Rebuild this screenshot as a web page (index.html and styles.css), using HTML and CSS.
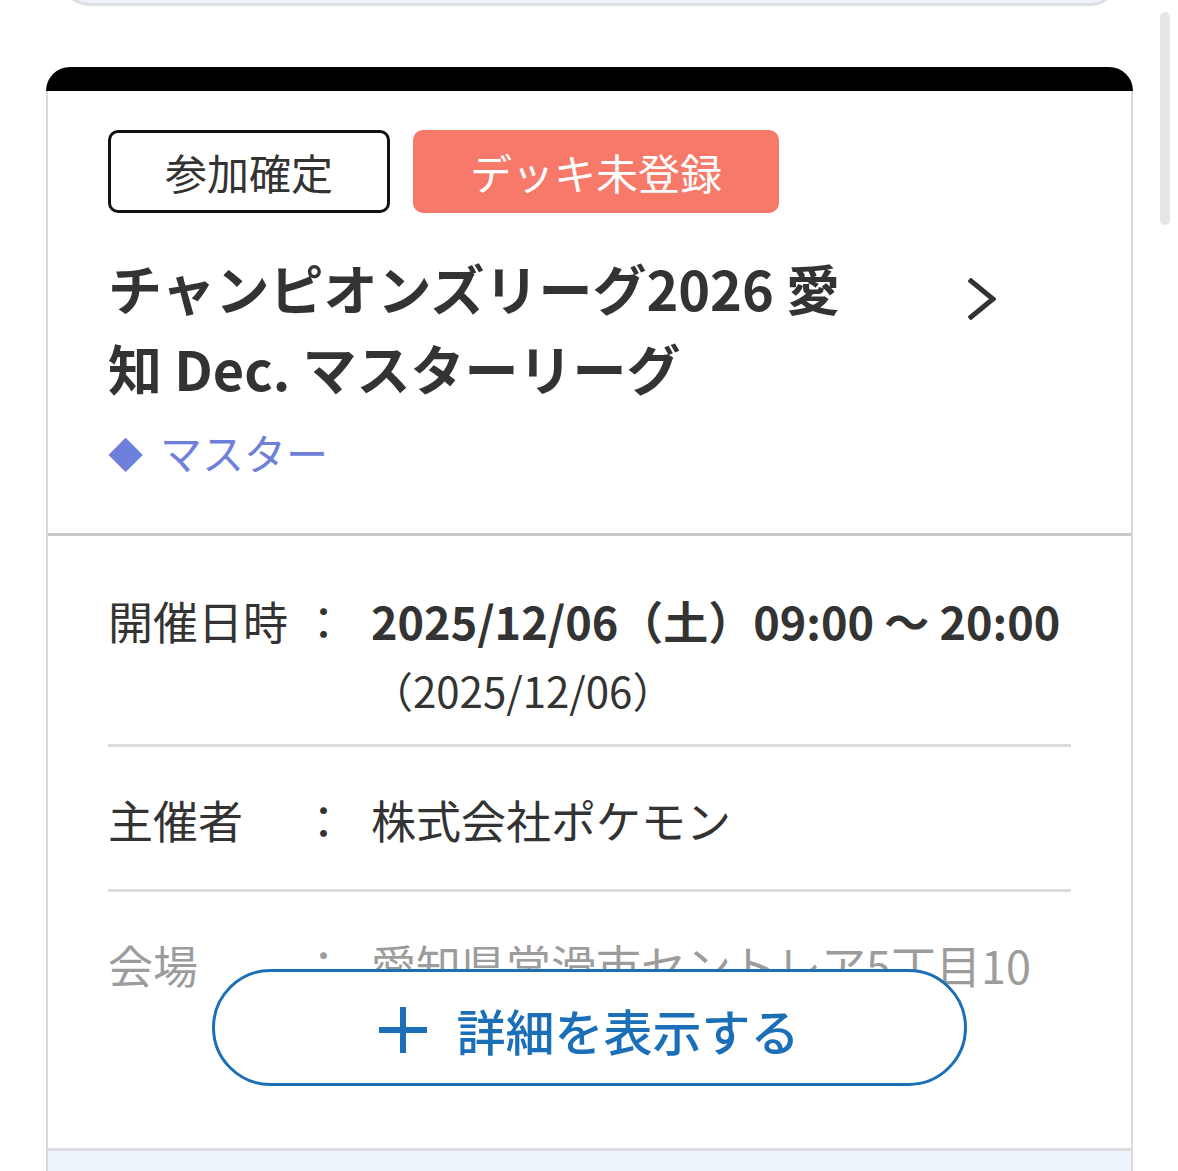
FILE: index.html
```html
<!DOCTYPE html>
<html lang="ja">
<head>
<meta charset="utf-8">
<title>大会カード</title>
<link rel="stylesheet" href="styles.css">
</head>
<body>
<div class="page">
  <div class="prev-card"></div>

  <div class="card">
    <div class="card-cap"></div>
    <div class="card-body">
      <section class="head">
        <div class="badges">
          <span class="badge badge-outline">参加確定</span>
          <span class="badge badge-alert">デッキ未登録</span>
        </div>
        <div class="title-row">
          <h2 class="title">チャンピオンズリーグ2026 愛知 Dec. マスターリーグ</h2>
          <svg class="chevron" viewBox="0 0 28 42" width="28" height="42" aria-hidden="true">
            <polyline points="3,3 25,21 3,39" fill="none" stroke="#333" stroke-width="5" stroke-linecap="square" stroke-linejoin="miter"/>
          </svg>
        </div>
        <div class="category"><span class="diamond">◆</span>マスター</div>
      </section>

      <section class="details">
        <div class="rows">
          <div class="row">
            <div class="label">開催日時</div>
            <div class="colon">：</div>
            <div class="value">
              <div class="value-main">2025/12/06（土）09:00 ～ 20:00</div>
              <div class="value-sub">（2025/12/06）</div>
            </div>
          </div>
          <div class="row">
            <div class="label">主催者</div>
            <div class="colon">：</div>
            <div class="value"><div class="value-plain">株式会社ポケモン</div></div>
          </div>
          <div class="row row-faded">
            <div class="label">会場</div>
            <div class="colon">：</div>
            <div class="value"><div class="value-plain">愛知県常滑市セントレア5丁目10</div></div>
          </div>
        </div>
        <button class="more-btn" type="button">
          <svg class="plus" viewBox="0 0 48 46" width="48" height="46" aria-hidden="true">
            <rect x="0" y="20" width="48" height="6" fill="#1a6fb7"/>
            <rect x="21" y="0" width="6" height="46" fill="#1a6fb7"/>
          </svg>
          <span>詳細を表示する</span>
        </button>
      </section>

      <section class="footer"></section>
    </div>
  </div>

  <div class="scroll-thumb"></div>
</div>
</body>
</html>
```

FILE: styles.css
```css
* {
  box-sizing: border-box;
}

html, body {
  margin: 0;
  padding: 0;
  background: #ffffff;
}

body {
  font-family: "Noto Sans CJK JP", "Noto Sans", sans-serif;
  color: #333333;
  overflow: hidden;
  height: 1171px;
}

.page {
  position: relative;
  display: flow-root;
  width: 1178px;
  height: 1171px;
}

.prev-card {
  width: 1060px;
  height: 60px;
  margin: -54px 0 0 60px;
  background: #eef4fa;
  border: 3px solid #dde0e4;
  border-radius: 0 0 30px 30px;
}

.card {
  width: 1087px;
  margin: 61px 0 0 46px;
}

.card-cap {
  height: 24px;
  background: #000000;
  border-radius: 26px 26px 0 0;
}

.card-body {
  border-left: 2px solid #d9d9d9;
  border-right: 2px solid #d9d9d9;
}

/* head */
.head {
  padding: 39px 60px 50px;
  border-bottom: 3px solid #c8c8c8;
}

.badges {
  display: flex;
  gap: 23px;
}

.badge {
  display: inline-block;
  height: 83px;
  line-height: 77px;
  padding: 0 54px;
  font-size: 42px;
  border-radius: 10px;
  border: 3px solid #111111;
  white-space: nowrap;
}

.badge-outline {
  color: #333333;
  background: #ffffff;
}

.badge-alert {
  color: #ffffff;
  background: #f6796a;
  border-color: #f6796a;
}

.title-row {
  display: flex;
  justify-content: space-between;
  align-items: flex-start;
  margin-top: 35px;
}

.title {
  width: 770px;
  margin: 0;
  font-size: 54px;
  line-height: 80px;
  font-weight: 700;
  color: #333333;
}

.chevron {
  display: block;
  margin: 30px 75px 0 0;
}

.category {
  margin-top: 14px;
  font-size: 42px;
  line-height: 60px;
  color: #6e7fdc;
}

.diamond {
  display: inline-block;
  width: 52px;
  font-size: 35px;
  vertical-align: 2px;
}

/* details */
.details {
  padding: 12px 60px 62px;
  border-bottom: 3px solid #d9dbde;
}

.rows {
  height: 453px;
  overflow: hidden;
}

.row {
  display: grid;
  grid-template-columns: 193px 45px 1fr;
  padding: 38px 0 34px;
  border-bottom: 3px solid #dcdcdc;
  font-size: 45px;
  line-height: 70px;
}

.row-faded {
  opacity: 0.48;
  border-bottom: none;
}

.label {
  white-space: nowrap;
}

.colon {
  text-align: center;
}

.value {
  padding-left: 25px;
}

.value-main {
  font-weight: 700;
  white-space: nowrap;
}

.value-sub {
  margin-top: 14px;
  font-size: 42px;
  line-height: 40px;
}

.more-btn {
  position: relative;
  z-index: 1;
  display: flex;
  align-items: center;
  justify-content: center;
  gap: 29px;
  width: 755px;
  height: 117px;
  margin: -32px auto 0;
  padding: 4px 0 0;
  background: #ffffff;
  border: 3px solid #1a6fb7;
  border-radius: 60px;
  color: #1a6fb7;
  font-family: "Noto Sans CJK JP", "Noto Sans", sans-serif;
  font-size: 49px;
  font-weight: 500;
  cursor: pointer;
}

.plus {
  display: block;
  flex: none;
}

.footer {
  height: 60px;
  background: #edf4fb;
}

.scroll-thumb {
  position: absolute;
  left: 1160px;
  top: 12px;
  width: 10px;
  height: 213px;
  border-radius: 5px;
  background: #e6e6e6;
}
```
